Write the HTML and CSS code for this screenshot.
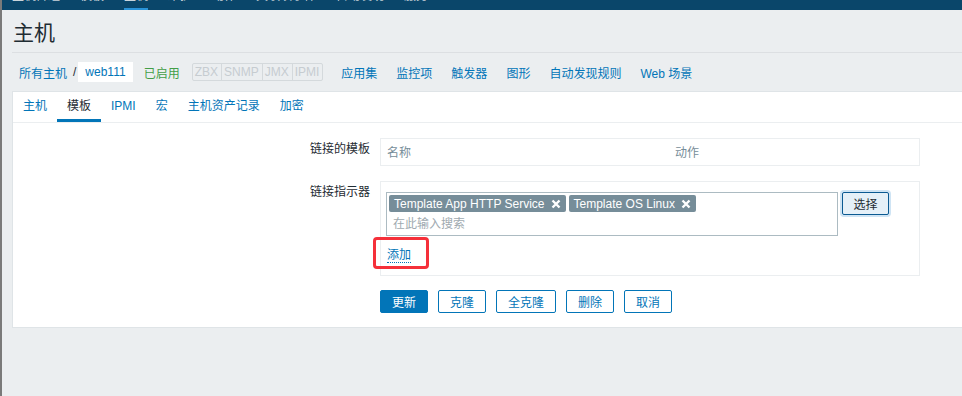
FILE: index.html
```html
<!DOCTYPE html>
<html lang="zh-CN">
<head>
  <meta charset="UTF-8" />
  <title>主机</title>
  <link rel="stylesheet" href="styles.css">
</head>
<body>

<div class="top-nav">
  <a href="#">主机群组</a>
  <a href="#">模板</a>
  <a href="#" class="selected">主机</a>
  <a href="#">维护</a>
  <a href="#">动作</a>
  <a href="#">关联项事件</a>
  <a href="#">自动发现</a>
  <a href="#">服务</a>
</div>

<div class="page">
  <div class="header-title">
    <h1>主机</h1>
  </div>

  <!-- host breadcrumbs -->
  <div class="host-nav">
    <a href="#" class="crumb">所有主机</a>
    <span class="sep">/</span>
    <span class="crumb-current">web111</span>
    <span class="status-on">已启用</span>
    <span class="status-group">
      <span class="status-box">ZBX</span><span class="status-box">SNMP</span><span class="status-box">JMX</span><span class="status-box">IPMI</span>
    </span>
    <a href="#" class="crumb">应用集</a>
    <a href="#" class="crumb">监控项</a>
    <a href="#" class="crumb">触发器</a>
    <a href="#" class="crumb">图形</a>
    <a href="#" class="crumb">自动发现规则</a>
    <a href="#" class="crumb">Web 场景</a>
  </div>

  <div class="container">
    <div class="tabs">
      <a href="#">主机</a>
      <a href="#" class="active">模板</a>
      <a href="#">IPMI</a>
      <a href="#">宏</a>
      <a href="#">主机资产记录</a>
      <a href="#">加密</a>
    </div>

    <div class="form-list">
      <label class="form-label">链接的模板</label>
      <div class="form-field">
        <div class="linked-table">
          <span class="col-name">名称</span>
          <span class="col-action">动作</span>
        </div>
      </div>

      <label class="form-label">链接指示器</label>
      <div class="form-field">
        <div class="link-box">
          <div class="ms-row">
            <div class="multiselect">
              <div class="tags">
                <span class="tag">Template App HTTP Service <svg viewBox="0 0 10 10" width="10" height="10"><path d="M1.5 1.5 L8.5 8.5 M8.5 1.5 L1.5 8.5" stroke="#fff" stroke-width="2.4"/></svg></span>
                <span class="tag">Template OS Linux <svg viewBox="0 0 10 10" width="10" height="10"><path d="M1.5 1.5 L8.5 8.5 M8.5 1.5 L1.5 8.5" stroke="#fff" stroke-width="2.4"/></svg></span>
              </div>
              <input type="text" placeholder="在此输入搜索">
            </div>
            <button class="btn-select">选择</button>
          </div>
          <a href="#" class="add-link">添加</a>
        </div>
      </div>

      <div></div>
      <div class="form-buttons">
        <button class="btn-main">更新</button>
        <button class="btn-alt">克隆</button>
        <button class="btn-alt">全克隆</button>
        <button class="btn-alt">删除</button>
        <button class="btn-alt">取消</button>
      </div>
    </div>
  </div>
</div>

</body>
</html>
```

FILE: styles.css
```css
body {
  margin: 0;
  font-family: Arial, "Liberation Sans", "Noto Sans CJK SC", sans-serif;
  font-size: 12px;
  color: #1f2c33;
  background: #ebeef0;
  border-left: 2px solid #7a7a7a;
  min-height: 396px;
  box-sizing: border-box;
}

a {
  color: #0275b8;
  text-decoration: none;
}

.top-nav {
  display: flex;
  height: 10px;
  overflow: hidden;
  background: #0a466a;
  padding-left: 0;
}

.top-nav a {
  display: block;
  margin: -10px 10px 0 10px;
  line-height: 12px;
  height: 20px;
  color: #c9d4db;
  box-sizing: border-box;
}

.top-nav a.selected {
  border-bottom: 2px solid #2a93d8;
}

.page {
  padding-left: 10px;
}

.header-title {
  border-bottom: 1px solid #dcdfe2;
  height: 42px;
  display: flex;
  align-items: center;
}

.header-title h1 {
  margin: 0 0 0 1px;
  font-size: 21px;
  font-weight: normal;
  color: #1f2c33;
}

.host-nav {
  display: flex;
  align-items: center;
  height: 20px;
  margin: 9px 0 9px 7px;
}

.crumb {
  margin-right: 19px;
}

.host-nav .crumb:first-child {
  margin-right: 6px;
}

.sep {
  color: #1f2c33;
  margin-right: 2px;
}

.crumb-current {
  background: #fff;
  height: 20px;
  line-height: 20px;
  padding: 0 7px;
  margin-right: 11px;
  color: #0275b8;
}

.status-on {
  color: #429e47;
  margin-right: 12px;
}

.status-group {
  display: flex;
  border: 1px solid #d4d9dc;
  border-radius: 2px;
  margin-right: 18px;
}

.status-box {
  color: #c6ccd0;
  border-right: 1px solid #d4d9dc;
  padding: 0 3px 0 2px;
  line-height: 16px;
}

.status-box:last-child {
  border-right: none;
}

.container {
  background: #fff;
  border: 1px solid #dfe4e7;
  border-right: none;
  padding-bottom: 14px;
}

.tabs {
  display: flex;
  border-bottom: 1px solid #ebeef0;
  height: 30px;
}

.tabs a {
  padding: 0 10px;
  line-height: 28px;
  height: 30px;
  box-sizing: border-box;
}

.tabs a.active {
  color: #1f2c33;
  border-bottom: 3px solid #0275b8;
}

.form-list {
  display: grid;
  grid-template-columns: 357px 540px;
  column-gap: 10px;
  row-gap: 15px;
  margin-top: 15px;
}

.form-label {
  text-align: right;
  line-height: 22px;
}

.linked-table {
  border: 1px solid #ebeef0;
  height: 28px;
  box-sizing: border-box;
  display: flex;
  align-items: center;
  color: #768d99;
  padding-bottom: 2px;
}

.col-name {
  padding-left: 6px;
  width: 288px;
}

.link-box {
  border: 1px solid #ebeef0;
  height: 95px;
  box-sizing: border-box;
  padding: 10px 5px 0 5px;
}

.ms-row {
  display: flex;
  align-items: flex-start;
}

.multiselect {
  width: 452px;
  height: 44px;
  box-sizing: border-box;
  border: 1px solid #acbbc2;
  padding: 2px 2px 0 2px;
}

.tags {
  display: flex;
  gap: 3px;
}

.tag {
  display: flex;
  align-items: center;
  background: #768d99;
  color: #fff;
  border-radius: 2px;
  height: 17px;
  padding: 0 5px 0 5px;
  white-space: nowrap;
}

.tag svg {
  margin-left: 6px;
}

.multiselect input {
  border: none;
  outline: none;
  font: inherit;
  padding: 5px 4px 3px 4px;
  width: 100%;
  box-sizing: border-box;
}

.multiselect input::placeholder {
  color: #a0aab0;
}

.btn-select {
  margin-left: 4px;
  width: 47px;
  height: 23px;
  font: inherit;
  color: #1f2c33;
  background: #e5f0f8;
  border: 1px solid #0b5a92;
  border-radius: 2px;
  box-shadow: 0 0 0 2px #cfe4f4;
}

.add-link {
  display: inline-block;
  margin: 12px 0 0 1px;
  border-bottom: 1px dotted #0275b8;
  line-height: 14px;
  position: relative;
}

.add-link::after {
  content: "";
  position: absolute;
  left: -14px;
  top: -11px;
  width: 50px;
  height: 26px;
  border: 3px solid #f5303a;
  border-radius: 4px;
}

.form-buttons {
  display: flex;
  gap: 10px;
  margin-top: -1px;
}

.form-buttons button {
  height: 23px;
  font: inherit;
  border-radius: 2px;
  padding: 0 11px;
}

.btn-main {
  background: #0275b8;
  border: 1px solid #0275b8;
  color: #fff;
}

.btn-alt {
  background: #fff;
  border: 1px solid #0275b8;
  color: #0275b8;
}
```
